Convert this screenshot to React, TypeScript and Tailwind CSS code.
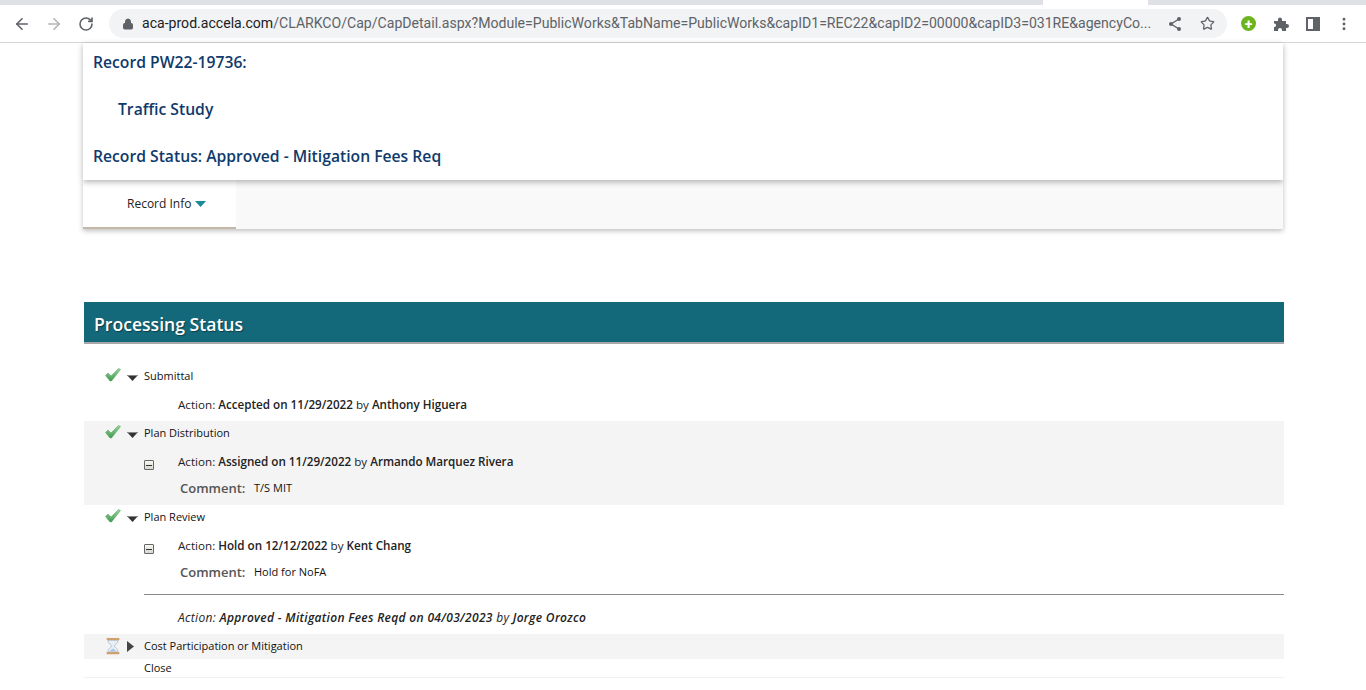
import { ReactNode } from 'react';
import { ArrowLeft, ArrowRight, RotateCw, Lock, Star, MoreVertical } from 'lucide-react';

const chrome = "font-['Roboto',sans-serif]";
const body = "font-['Open_Sans','Liberation_Sans',sans-serif]";

function Check() {
  return (
    <svg width="16" height="14" viewBox="0 0 16 14" className="shrink-0">
      <defs>
        <linearGradient id="chk" x1="0" y1="0" x2="0" y2="1">
          <stop offset="0" stopColor="#9ad59a" />
          <stop offset="1" stopColor="#3f9a4f" />
        </linearGradient>
      </defs>
      <path d="M0.5 7.5 L3 5 L6 8 L13.5 0.5 L15.5 1.5 L6.5 13 L5 13 Z" fill="url(#chk)" stroke="#4f9a5a" strokeWidth="0.5" />
    </svg>
  );
}

function Hourglass() {
  return (
    <svg width="16" height="18" viewBox="0 0 16 18" className="shrink-0">
      <path d="M3 3 H13 C13 7 9.5 8 9 9 C9.5 10 13 11 13 15 H3 C3 11 6.5 10 7 9 C6.5 8 3 7 3 3 Z" fill="#e6eff7" stroke="#9fb3c6" strokeWidth="0.7" />
      <path d="M5 14.6 C5.5 12.5 7.5 12 8 11.5 C8.5 12 10.5 12.5 11 14.6 Z" fill="#a9c4dd" />
      <rect x="1.5" y="1" width="13" height="2.2" rx="1" fill="#cf9f6c" />
      <rect x="1.5" y="15" width="13" height="2.2" rx="1" fill="#cf9f6c" />
    </svg>
  );
}

function Caret({ open }: { open: boolean }) {
  return open ? (
    <svg width="11" height="6" viewBox="0 0 11 6" className="shrink-0 mt-[3px]">
      <path d="M0 0 H11 L5.5 6 Z" fill="#333" />
      <path d="M0 0 H11 L10 1 H1 Z" fill="#888" />
    </svg>
  ) : (
    <svg width="7" height="11" viewBox="0 0 7 11" className="shrink-0"><path d="M0 0 L7 5.5 L0 11 Z" fill="#444" /></svg>
  );
}

function Minus() {
  return (
    <span className="w-[10px] h-[10px] border border-[#666] rounded-[1px] bg-gradient-to-b from-[#f8f8f4] to-[#d8d8d0] flex items-center justify-center shrink-0 mt-[6px]">
      <span className="w-[6px] h-[1px] bg-[#333]" />
    </span>
  );
}

function StepRow({ icon, open = true, label, h, cls = '' }: { icon?: ReactNode; open?: boolean; label: string; h: string; cls?: string }) {
  return (
    <div className={`flex items-center ${h} ${cls}`}>
      <span className="w-[22px] ml-[21px] -mt-[2px] flex justify-start">{icon}</span>
      <span className="w-[17px] flex justify-start"><Caret open={open} /></span>
      <span className="text-[11px] text-[#111]">{label}</span>
    </div>
  );
}

function Action({ text, by, toggle, italic }: { text: string; by: string; toggle?: boolean; italic?: boolean }) {
  return (
    <div className={`flex items-center h-[26px] text-[#222] ${italic ? 'italic text-[12px] tracking-[0.32px]' : 'text-[11.65px]'}`}>
      <span className="w-[60px] pl-[60px]">{toggle && <Minus />}</span>
      <span className="ml-[34px]">Action: <b className="font-semibold">{text}</b> by <b className="font-semibold">{by}</b></span>
    </div>
  );
}

function Comment({ text }: { text: string }) {
  return (
    <div className="flex items-center h-[26px] pt-[2px] pl-[96px]">
      <span className="text-[13px] text-[#555] font-semibold w-[74px]">Comment:</span>
      <span className="text-[11px] text-[#111] pb-[2px]">{text}</span>
    </div>
  );
}

export default function App() {
  return (
    <div className={`h-[690px] w-[1366px] overflow-hidden bg-white flex flex-col ${body}`}>
      {/* browser chrome */}
      <div className="h-[5px] bg-[#dee1e6] flex shrink-0">
        <div className="w-[1043px] rounded-br-lg bg-[#dee1e6]" />
        <div className="w-[105px] bg-white" />
      </div>
      <div className={`h-[38px] shrink-0 border-b border-[#d5d7da] flex items-center ${chrome}`}>
        <ArrowLeft size={18} className="ml-[13px] text-[#5f6368]" strokeWidth={2.2} />
        <ArrowRight size={18} className="ml-[14px] text-[#b4b6b9]" strokeWidth={2.2} />
        <RotateCw size={16} className="ml-[15px] text-[#5f6368]" strokeWidth={2.4} />
        <div className="ml-[15px] w-[1118px] h-[29px] rounded-full bg-[#f1f3f4] flex items-center">
          <Lock size={12} className="ml-[13px] text-[#5f6368]" fill="#5f6368" />
          <span className="ml-[8px] text-[14.09px] whitespace-nowrap text-[#5f6368]">
            <span className="text-[#202124]">aca-prod.accela.com</span>/CLARKCO/Cap/CapDetail.aspx?Module=PublicWorks&amp;TabName=PublicWorks&amp;capID1=REC22&amp;capID2=00000&amp;capID3=031RE&amp;agencyCo...
          </span>
          <svg width="16" height="16" viewBox="0 0 16 16" className="ml-[16px]">
            <path d="M12 3 L4 8 L12 13" fill="none" stroke="#5f6368" strokeWidth="1.4" />
            <circle cx="12" cy="3" r="2" fill="#5f6368" />
            <circle cx="4" cy="8" r="2" fill="#5f6368" />
            <circle cx="12" cy="13" r="2" fill="#5f6368" />
          </svg>
          <Star size={15} className="ml-[17px] text-[#5f6368]" strokeWidth={2} />
        </div>
        <span className="ml-[14px] w-[15px] h-[15px] rounded-full bg-[#6cb51e] flex items-center justify-center text-white text-[14px] font-bold leading-none">+</span>
        <svg width="16" height="16" viewBox="0 0 16 16" className="ml-[17px]">
          <path d="M1 5 H5 V3.5 A2 2 0 0 1 9 3.5 V5 H13 V8 H14 A2 2 0 0 1 14 12 H13 V15 H9 V14 A2 2 0 0 0 5 14 V15 H1 V11 H2 A2 2 0 0 0 2 7.5 H1 Z" fill="#5f6368" />
        </svg>
        <span className="ml-[17px] w-[14px] h-[14px] border-2 border-[#5f6368] flex justify-end"><span className="w-[5px] bg-[#5f6368]" /></span>
        <MoreVertical size={16} className="ml-[16px] text-[#5f6368]" strokeWidth={2.4} />
      </div>

      {/* page */}
      <div className="ml-[83px] w-[1201px]">
        <div className="h-[137px] w-[1200px] bg-white shadow-[0_2px_6px_rgba(0,0,0,0.3)] relative flex flex-col pl-[10px] text-[15.7px] font-semibold text-[#0f3a6b]">
          <div className="h-[39px] flex items-center">Record PW22-19736:</div>
          <div className="h-[47px] flex items-center pt-[8px] pl-[25px]">Traffic Study</div>
          <div className="h-[47px] flex items-center pt-[8px]">Record Status: Approved - Mitigation Fees Req</div>
        </div>
        <div className="h-[49px] w-[1200px] bg-[#f9f9f9] shadow-[0_2px_5px_rgba(0,0,0,0.25)] flex">
          <div className="w-[153px] h-[49px] bg-white border-b-2 border-[#c4b8a8] flex items-center pl-[44px] gap-[4px] text-[12px] text-[#222]">
            Record Info
            <svg width="11" height="6" viewBox="0 0 11 6"><path d="M0 0 H11 L5.5 6 Z" fill="#1b8a99" /></svg>
          </div>
        </div>

        <div className="mt-[73px] ml-[1px] w-[1200px]">
          <div className="h-[42px] bg-[#13697a] border-b-2 border-[#a8a8a8] flex items-center pt-[5px] pl-[10px] text-[17.6px] font-semibold text-white [text-shadow:1px_1px_1px_rgba(0,0,0,0.4)]">
            Processing Status
          </div>
          <div className="h-[20px]" />
          <StepRow icon={<Check />} label="Submittal" h="h-[24px]" />
          <div className="flex items-center h-[33px] text-[11.65px] text-[#222]">
            <span className="ml-[94px]">Action: <b className="font-semibold">Accepted on 11/29/2022</b> by <b className="font-semibold">Anthony Higuera</b></span>
          </div>
          <div className="bg-[#f4f4f4] h-[84px]">
            <StepRow icon={<Check />} label="Plan Distribution" h="h-[24px]" />
            <div className="h-[4px]" />
            <Action toggle text="Assigned on 11/29/2022" by="Armando Marquez Rivera" />
            <Comment text="T/S MIT" />
          </div>
          <StepRow icon={<Check />} label="Plan Review" h="h-[24px]" />
          <div className="h-[4px]" />
          <Action toggle text="Hold on 12/12/2022" by="Kent Chang" />
          <Comment text="Hold for NoFA" />
          <div className="ml-[60px] mt-[9px] border-t border-[#8a8a8a]" />
          <div className="h-[10px]" />
          <Action italic text="Approved - Mitigation Fees Reqd on 04/03/2023" by="Jorge Orozco" />
          <div className="h-[3px]" />
          <StepRow icon={<Hourglass />} open={false} label="Cost Participation or Mitigation" h="h-[25px]" cls="bg-[#f4f4f4]" />
          <div className="h-[19px] flex items-center pt-[1px] pl-[60px] text-[11px] text-[#111] border-b border-[#f2f2f2]">Close</div>
        </div>
      </div>
    </div>
  );
}
